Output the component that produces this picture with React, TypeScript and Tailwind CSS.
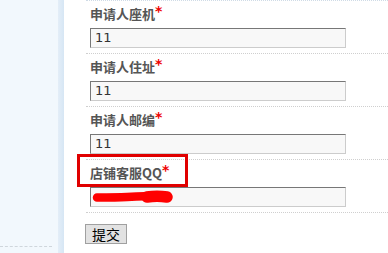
import React from "react";

const labelFont = { fontFamily: '"Noto Sans CJK SC", "DejaVu Sans", sans-serif' };

function Row({ label, value, children }: { label: string; value?: string; children?: React.ReactNode }) {
  return (
    <div className="flex flex-col pt-[3px] pb-[5px] pl-[4px] border-b border-dotted border-[#cfcfcf]">
      <div className="h-[20px] leading-[20px] text-[13px] font-bold text-[#555]" style={labelFont}>
        {label}
        <span className="text-[#e00] text-[14px] font-bold align-top leading-[15px]" style={{ fontFamily: '"DejaVu Sans", sans-serif' }}>*</span>
      </div>
      <div className="relative mt-[4px] w-[256px] h-[20px] bg-[#f8f8f8] border border-t-[#777] border-l-[#777] border-r-[#ccc] border-b-[#ccc] pl-[4px] text-[13px] leading-[18px] text-[#333]" style={{ fontFamily: '"DejaVu Sans", sans-serif' }}>
        {value}
        {children}
      </div>
    </div>
  );
}

export default function App() {
  return (
    <div className="flex w-[388px] h-[253px] overflow-hidden bg-white">
      <div className="w-[58px] h-full bg-[#f2f8fd] flex flex-col justify-end pb-[6px]">
        <div className="w-[52px] border-b border-dashed border-[#cfd6dc]" />
      </div>
      <div className="w-[6px] h-full bg-gradient-to-r from-[#e4eef8] to-[#d6e6f4]" />
      <div className="flex-1 pl-[22px] relative">
        <div className="border-t border-dotted border-[#cfdbe6]">
          <Row label="申请人座机" value="11" />
          <Row label="申请人住址" value="11" />
          <Row label="申请人邮编" value="11" />
          <Row label="店铺客服QQ">
            <svg className="absolute left-0 top-0 block" width="84" height="18" viewBox="0 0 84 18">
              <path
                d="M6 9.5 C16 9.5 26 9.5 36 9 C46 8.5 56 8 66 8"
                fill="none"
                stroke="#f00"
                strokeWidth="8.5"
                strokeLinecap="round"
              />
              <path
                d="M56 9 C62 8 70 8 76 9"
                fill="none"
                stroke="#f00"
                strokeWidth="11.5"
                strokeLinecap="round"
              />
            </svg>
          </Row>
        </div>
        <div className="pt-[9px] -ml-[1px]">
          <button
            className="w-[42px] h-[20px] bg-[#e2e2e2] border border-[#a0a0a0] text-[14px] leading-[18px] text-black"
            style={labelFont}
          >
            提交
          </button>
        </div>
        <div className="absolute left-[13px] top-[154px] w-[111px] h-[33px] border-[3px] border-[#e00000]" />
      </div>
    </div>
  );
}
